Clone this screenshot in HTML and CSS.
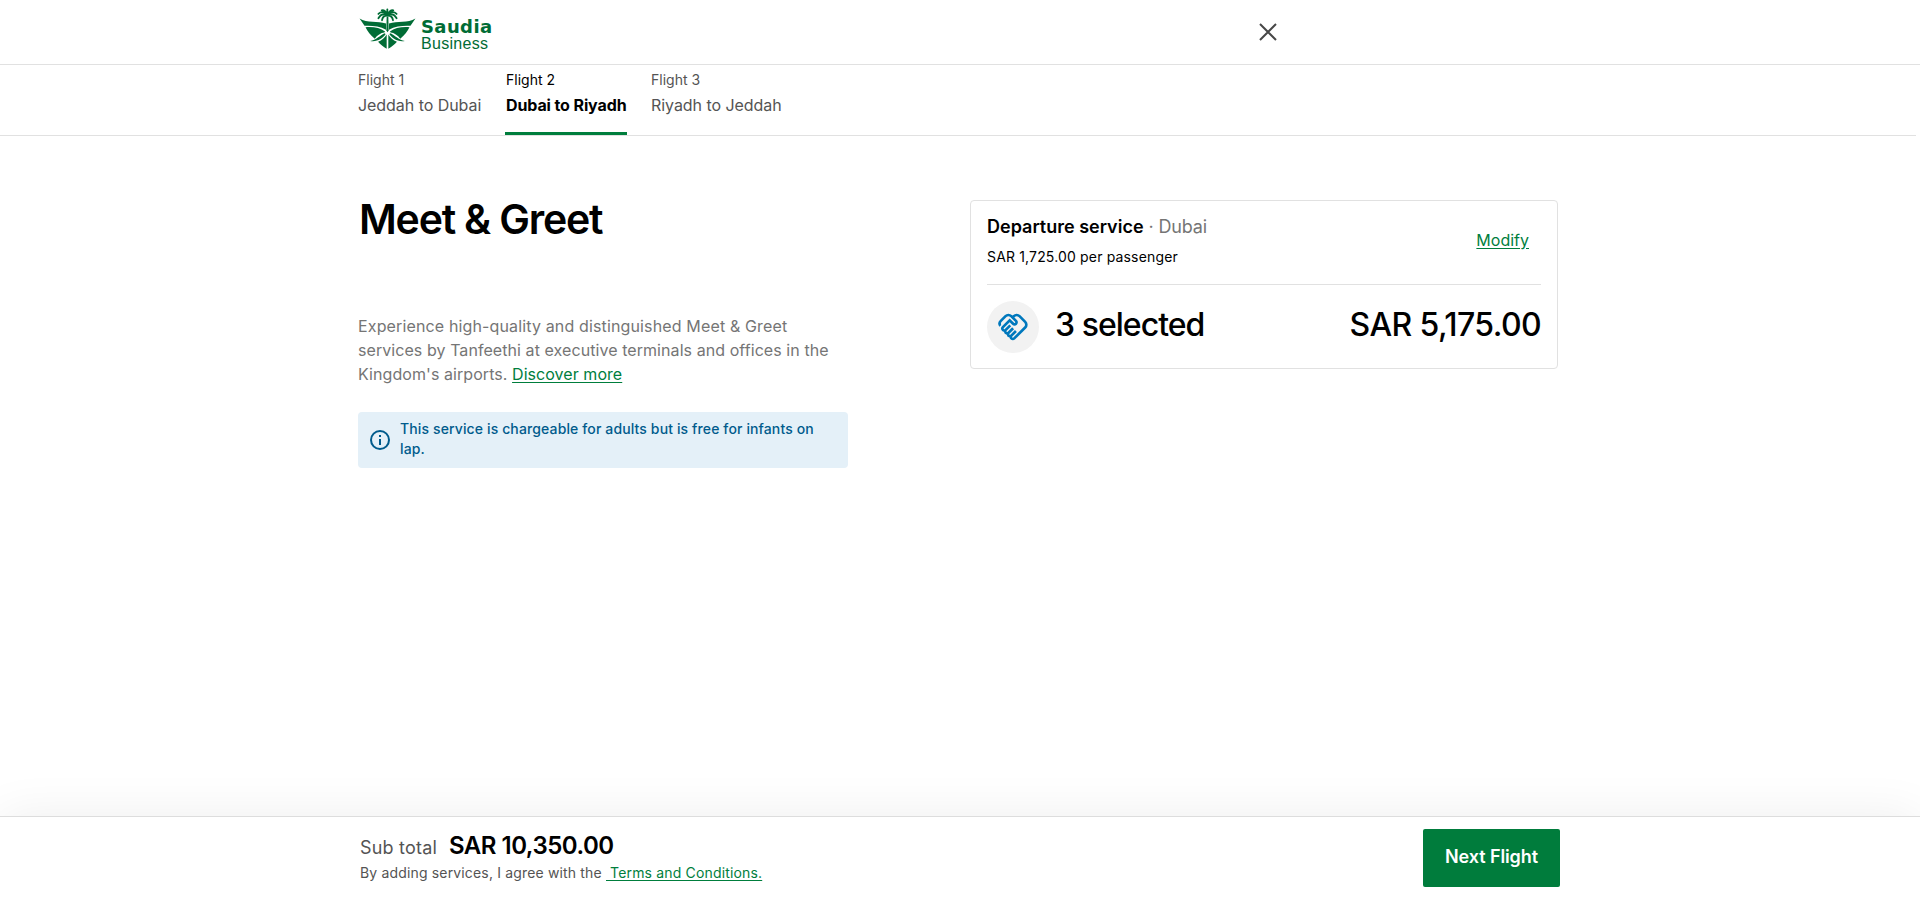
FILE: index.html
```html
<!DOCTYPE html>
<html lang="en">
<head>
<meta charset="utf-8">
<title>Meet &amp; Greet</title>
<link rel="stylesheet" href="styles.css">
</head>
<body>
<header class="topbar">
  <div class="topbar-inner">
    <div class="logo">
      <svg class="logo-mark" viewBox="28 24 171 124" fill="#006c35">
        <path d="M29 56C52 70 84 64 109 71V90C90 79 66 77 44 78Z"/>
        <path d="M198 56C175 70 143 64 118 71V90C137 79 161 77 183 78Z"/>
        <path d="M47 82C70 80 92 84 106 95L104 98C94 99 82 106 75 117C62 106 53 94 47 82Z"/>
        <path d="M180 82C157 80 135 84 121 95L123 98C133 99 145 106 152 117C165 106 174 94 180 82Z"/>
        <path d="M61 124C79 120 91 107 104 100L108 103C99 116 82 128 61 124Z"/>
        <path d="M166 124C148 120 136 107 123 100L119 103C128 116 145 128 166 124Z"/>
        <path d="M85 126C97 121 105 114 111 104V147C101 141 92 134 85 126Z"/>
        <path d="M142 126C130 121 122 114 116 104V147C126 141 135 134 142 126Z"/>
        <path d="M111 50H116L117 92L113.500 97L110 92Z"/>
        <g fill="none" stroke="#006c35" stroke-width="5.500" stroke-linecap="round">
          <path d="M113 46C102 40 92 45 86 55M113 44C103 35 93 35 86 42M112 44C108 33 103 30 96 31M113 44V28M115 44C119 33 124 30 131 31M114 44C124 35 134 35 141 42M114 46C125 40 135 45 141 55M112 47C104 47 98 53 97 61M115 47C123 47 129 53 130 61"/>
        </g>
      </svg>
      <div class="logo-text">
        <span class="logo-name">Saudia</span>
        <span class="logo-sub">Business</span>
      </div>
    </div>
    <svg class="close" viewBox="0 0 18 18"><path d="M1 1 17 17M17 1 1 17" fill="none" stroke="#474747" stroke-width="2"/></svg>
  </div>
</header>
<nav class="flights">
  <div class="flights-inner">
    <div class="flight t1"><span class="flight-no">Flight 1</span><span class="flight-route">Jeddah to Dubai</span></div>
    <div class="flight t2 active"><span class="flight-no">Flight 2</span><span class="flight-route">Dubai to Riyadh</span></div>
    <div class="flight t3"><span class="flight-no">Flight 3</span><span class="flight-route">Riyadh to Jeddah</span></div>
  </div>
</nav>
<main class="content">
  <section class="intro">
    <h1 class="title">Meet &amp; Greet</h1>
    <p class="desc"><span class="l1">Experience high-quality and distinguished Meet &amp; Greet</span><br><span class="l2">services by Tanfeethi at executive terminals and offices in the</span><br><span class="l3">Kingdom's airports.</span> <a class="link more">Discover more</a></p>
    <div class="notice">
      <svg class="info" viewBox="0 0 20 20"><circle cx="10" cy="10" r="9" fill="none" stroke="#005b8c" stroke-width="2"/><path d="M9 5h2v2H9zM9 9h2v6H9z" fill="#005b8c"/></svg>
      <p class="notice-text">This service is chargeable for adults but is free for infants on<br>lap.</p>
    </div>
  </section>
  <section class="card">
    <div class="card-head">
      <div>
        <div class="service"><span class="service-name">Departure service</span><span class="service-city"> · Dubai</span></div>
        <div class="rate">SAR 1,725.00 per passenger</div>
      </div>
      <a class="link modify">Modify</a>
    </div>
    <div class="card-body">
      <span class="badge"><svg viewBox="0 0 24 24" fill="#0078bd"><path d="M12.220 19.850c-.18.18-.5.21-.71 0a.504.504 0 0 1 0-.71l3.390-3.390-1.410-1.410-3.390 3.390c-.19.2-.51.19-.71 0a.504.504 0 0 1 0-.71l3.390-3.390-1.410-1.410-3.390 3.390c-.18.18-.5.21-.71 0a.513.513 0 0 1 0-.71l3.390-3.390-1.420-1.410-3.390 3.390c-.18.18-.5.21-.71 0a.513.513 0 0 1 0-.71L9.520 8.400l1.870 1.860c.95.95 2.590.94 3.540 0 .98-.98.98-2.560 0-3.540l-1.860-1.860.28-.28c.78-.78 2.050-.78 2.830 0l4.240 4.240c.78.78.78 2.050 0 2.830l-8.200 8.200zm9.610-6.780a4.008 4.008 0 0 0 0-5.660l-4.240-4.240a4.008 4.008 0 0 0-5.660 0l-.28.28-.28-.28a4.008 4.008 0 0 0-5.660 0L2.170 6.710a3.992 3.992 0 0 0-.4 5.190l1.450-1.450a2 2 0 0 1 .37-2.330l3.540-3.540c.78-.78 2.050-.78 2.830 0l3.560 3.560c.18.18.21.5 0 .71-.21.21-.53.18-.71 0L9.520 5.570l-5.800 5.790c-.98.97-.98 2.560 0 3.540.39.39.89.63 1.420.7a2.458 2.458 0 0 0 2.120 2.120 2.458 2.458 0 0 0 2.120 2.120c.07.54.31 1.030.7 1.420.47.47 1.100.73 1.770.73.67 0 1.300-.26 1.770-.73l8.210-8.190z"/></svg></span>
      <span class="selected">3 selected</span>
      <span class="price">SAR 5,175.00</span>
    </div>
  </section>
</main>
<footer class="footer">
  <div class="footer-inner">
    <div>
      <div class="total"><span class="total-label">Sub total</span><span class="total-value">SAR 10,350.00</span></div>
      <div class="terms"><span class="agree">By adding services, I agree with the</span><a class="link tc">&nbsp;Terms and Conditions.</a></div>
    </div>
    <button class="next">Next Flight</button>
  </div>
</footer>
</body>
</html>
```
FILE: styles.css
```css
* { box-sizing: border-box; }
body { margin: 0; height: 901px; display: flex; flex-direction: column; background: #fff; color: #000; font-family: Inter, "Liberation Sans", sans-serif; overflow: hidden; }
h1, p { margin: 0; }
span, a, .rate { white-space: nowrap; }
.link { color: #007e3d; text-decoration: underline; text-underline-offset: 2px; }

.topbar { height: 65px; border-bottom: 1px solid #e1e1e1; }
.topbar-inner { width: 1204px; margin-left: 358px; display: flex; align-items: flex-start; }
.logo { display: flex; width: 901px; padding-left: 1px; }
.logo-mark { width: 57px; height: 41px; margin-top: 8px; }
.logo-text { display: flex; flex-direction: column; padding: 17px 0 0 5px; color: #006c35; }
.logo-name { font: 700 18px/20px "DejaVu Sans", sans-serif; letter-spacing: 0.4px; }
.logo-sub { font: 400 16px/17px "Liberation Sans", sans-serif; letter-spacing: 0.3px; margin-top: -2px; }
.close { width: 18px; height: 18px; margin-top: 23px; }

.flights { height: 71px; margin-right: 4px; border-bottom: 1px solid #e1e1e1; }
.flights-inner { display: flex; margin-left: 358px; height: 100%; }
.flight { display: flex; flex-direction: column; color: #545454; height: 70px; padding-top: 5px; margin-right: 24px; }
.flight-no { font-size: 14px; line-height: 20px; }
.flight-route { font-size: 16px; line-height: 22px; margin-top: 4px; letter-spacing: -0.05px; }
.t1 { width: 123px; }
.t2 { width: 122px; }
.t3 { width: 132px; }
.active { color: #000; border-bottom: 3px solid #007e3d; padding-left: 1px; }
.active .flight-route { font-weight: 700; letter-spacing: -0.11px; }

.content { display: flex; flex: 1; margin-left: 358px; align-items: flex-start; }
.intro { width: 612px; padding-top: 59px; }
.title { font-size: 41px; line-height: 48px; font-weight: 600; letter-spacing: -1.2px; padding-left: 1px; }
.desc { margin-top: 71px; font-size: 16px; line-height: 24px; color: #757575; }
.l1 { letter-spacing: 0.14px; }
.l2, .l3 { letter-spacing: 0.07px; }
.more { letter-spacing: 0.05px; }
.notice { display: flex; align-items: center; width: 490px; height: 56px; margin-top: 26px; padding-left: 12px; border-radius: 4px; background: #e4f0f8; }
.info { width: 20px; height: 20px; margin-right: 10px; }
.notice-text { font-size: 14px; line-height: 20px; font-weight: 500; letter-spacing: 0.125px; color: #005b8c; margin-top: -2px; white-space: nowrap; }

.card { width: 588px; height: 169px; margin-top: 64px; border: 1px solid #e1e1e1; border-radius: 4px; padding: 0 16px; }
.card-head { display: flex; justify-content: space-between; height: 84px; border-bottom: 1px solid #e1e1e1; }
.service { font-size: 18px; line-height: 26px; margin-top: 13px; }
.service-name { font-weight: 600; }
.service-city { color: #757575; white-space: pre; letter-spacing: -0.15px; }
.rate { font-size: 14px; line-height: 20px; margin-top: 7px; letter-spacing: 0.16px; }
.modify { font-size: 16px; line-height: 24px; margin: 27px 12px 0 0; }
.card-body { display: flex; align-items: flex-start; padding-top: 16px; }
.badge { width: 52px; height: 52px; border-radius: 50%; background: #f2f2f2; display: flex; align-items: center; justify-content: center; }
.badge svg { width: 32px; height: 32px; }
.selected, .price { font-size: 32px; line-height: 40px; font-weight: 500; margin-top: 4px; }
.selected { margin-left: 16px; letter-spacing: -0.97px; }
.price { margin-left: auto; letter-spacing: -0.6px; }

.footer { height: 85px; background: #fff; border-top: 1px solid #ddd; box-shadow: 0 0 50px rgba(0, 0, 0, 0.07); }
.footer-inner { display: flex; justify-content: space-between; width: 1200px; margin-left: 360px; }
.total { display: flex; align-items: baseline; height: 32px; margin-top: 13px; line-height: 32px; }
.total-label { font-size: 18px; color: #545454; width: 89px; letter-spacing: 0.2px; }
.total-value { font-size: 24px; font-weight: 600; letter-spacing: -0.5px; }
.terms { display: flex; font-size: 14px; line-height: 20px; margin-top: 1px; color: #545454; letter-spacing: 0.16px; }
.agree { width: 246px; }
.next { width: 137px; height: 58px; margin-top: 12px; padding: 0 0 2px; border: 0; border-radius: 2px; background: #007c3c; color: #fff; font: 600 18px/24px Inter, sans-serif; letter-spacing: -0.1px; }
```
